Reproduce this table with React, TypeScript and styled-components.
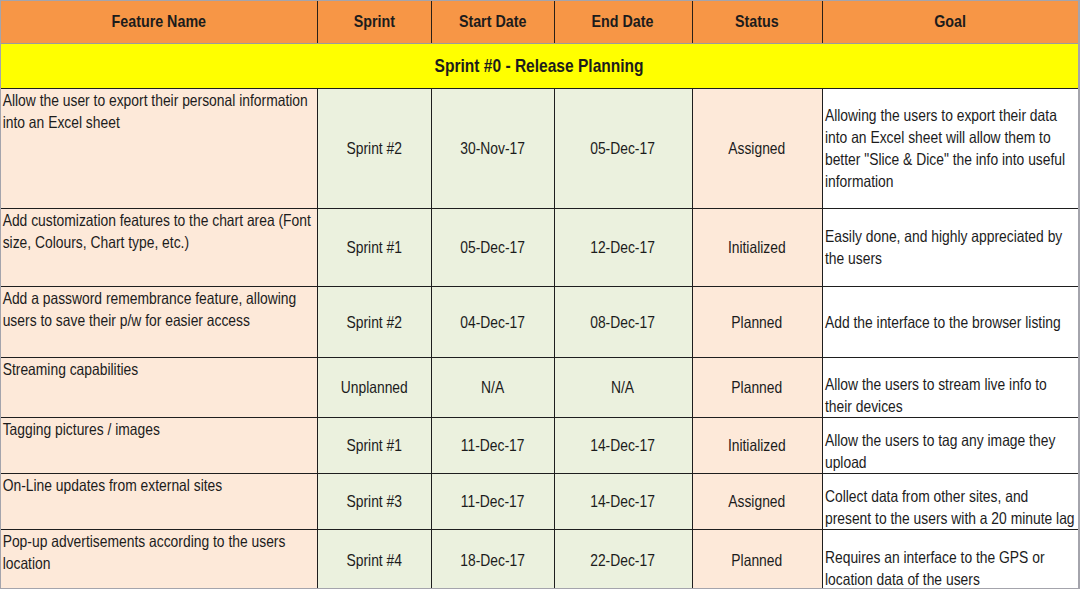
import styled, { createGlobalStyle } from 'styled-components'

const GlobalStyle = createGlobalStyle`
  html, body {
    margin: 0;
    padding: 0;
    background: #ffffff;
  }
`

// no Arial Narrow here: Liberation Sans squeezed horizontally stands in for it
const SQUEEZE = 0.84

const Frame = styled.div`
  width: 1080px;
  height: 589px;
  box-sizing: border-box;
  border: 1px solid #a4a4ac;
  border-right-width: 2px;
  overflow: hidden;
  background: #ffffff;
`

const Sheet = styled.table`
  width: 1077px;
  border-collapse: collapse;
  table-layout: fixed;
  font-family: 'Liberation Sans', Arial, sans-serif;
  color: #1c1c1c;
`

const Narrow = styled.span`
  display: block;
  width: ${100 / SQUEEZE}%;
  margin-left: ${-((100 / SQUEEZE - 100) / 2)}%;
  transform: scaleX(${SQUEEZE});
  transform-origin: center;
`

const HeadCell = styled.th`
  background: #f79646;
  font-size: 17px;
  font-weight: bold;
  text-align: center;
  vertical-align: middle;
  padding: 0;
  border-left: 1px solid #2a2017;
  border-right: 1px solid #2a2017;
  border-bottom: 1px solid #9c9c9c;
  &:first-child {
    border-left: none;
  }
  &:last-child {
    border-right: none;
  }
`

const BandCell = styled.td`
  background: #ffff00;
  font-size: 18.5px;
  font-weight: bold;
  text-align: center;
  vertical-align: middle;
  padding: 0;
  border-bottom: 1px solid #1e1e1e;
`

type Tone = 'peach' | 'green' | 'white'

const tones: Record<Tone, string> = {
  peach: '#fde9d9',
  green: '#ebf1de',
  white: '#ffffff',
}

const Cell = styled.td<{ $tone: Tone; $align?: 'left' | 'center'; $valign?: 'top' | 'middle' | 'bottom' }>`
  background: ${(p) => tones[p.$tone]};
  font-size: 16.5px;
  line-height: 22px;
  text-align: ${(p) => p.$align || 'center'};
  vertical-align: ${(p) => p.$valign || 'middle'};
  padding: ${(p) => (p.$align === 'left' ? '0 2px' : '0')};
  border: 1px solid #1e1e1e;
  &:first-child {
    border-left: none;
  }
  &:last-child {
    border-right: none;
  }
`

const Row = styled.tr<{ $h: number }>`
  height: ${(p) => p.$h}px;
`

type Item = {
  feature: string
  sprint: string
  start: string
  end: string
  status: string
  goal: string
  h: number
  goalAlign: 'middle' | 'bottom'
}

const items: Item[] = [
  {
    feature: 'Allow the user to export their personal information into an Excel sheet',
    sprint: 'Sprint #2',
    start: '30-Nov-17',
    end: '05-Dec-17',
    status: 'Assigned',
    goal: 'Allowing the users to export their data into an Excel sheet will allow them to better "Slice & Dice" the info into useful information',
    h: 120,
    goalAlign: 'middle',
  },
  {
    feature: 'Add customization features to the chart area (Font size, Colours, Chart type, etc.)',
    sprint: 'Sprint #1',
    start: '05-Dec-17',
    end: '12-Dec-17',
    status: 'Initialized',
    goal: 'Easily done, and highly appreciated by the users',
    h: 78,
    goalAlign: 'middle',
  },
  {
    feature: 'Add a password remembrance feature, allowing users to save their p/w for easier access',
    sprint: 'Sprint #2',
    start: '04-Dec-17',
    end: '08-Dec-17',
    status: 'Planned',
    goal: 'Add the interface to the browser listing',
    h: 71,
    goalAlign: 'middle',
  },
  {
    feature: 'Streaming capabilities',
    sprint: 'Unplanned',
    start: 'N/A',
    end: 'N/A',
    status: 'Planned',
    goal: 'Allow the users to stream live info to their devices',
    h: 60,
    goalAlign: 'bottom',
  },
  {
    feature: 'Tagging pictures / images',
    sprint: 'Sprint #1',
    start: '11-Dec-17',
    end: '14-Dec-17',
    status: 'Initialized',
    goal: 'Allow the users to tag any image they upload',
    h: 56,
    goalAlign: 'bottom',
  },
  {
    feature: 'On-Line updates from external sites',
    sprint: 'Sprint #3',
    start: '11-Dec-17',
    end: '14-Dec-17',
    status: 'Assigned',
    goal: 'Collect data from other sites, and present to the users with a 20 minute lag',
    h: 56,
    goalAlign: 'bottom',
  },
  {
    feature: 'Pop-up advertisements according to the users location',
    sprint: 'Sprint #4',
    start: '18-Dec-17',
    end: '22-Dec-17',
    status: 'Planned',
    goal: 'Requires an interface to the GPS or location data of the users',
    h: 61,
    goalAlign: 'bottom',
  },
]

const headers = ['Feature Name', 'Sprint', 'Start Date', 'End Date', 'Status', 'Goal']
const widths = [316, 114, 123, 138, 130, 256]

const App = () => {
  return (
    <Frame>
      <GlobalStyle />
      <Sheet>
        <colgroup>
          {widths.map((w, i) => (
            <col key={i} style={{ width: w }} />
          ))}
        </colgroup>
        <thead>
          <Row $h={42}>
            {headers.map((h) => (
              <HeadCell key={h}>
                <Narrow>{h}</Narrow>
              </HeadCell>
            ))}
          </Row>
        </thead>
        <tbody>
          <Row $h={45}>
            <BandCell colSpan={6}>
              <Narrow>Sprint #0 - Release Planning</Narrow>
            </BandCell>
          </Row>
          {items.map((it) => (
            <Row $h={it.h} key={it.feature}>
              <Cell $tone="peach" $align="left" $valign="top">
                <Narrow>{it.feature}</Narrow>
              </Cell>
              <Cell $tone="green">
                <Narrow>{it.sprint}</Narrow>
              </Cell>
              <Cell $tone="green">
                <Narrow>{it.start}</Narrow>
              </Cell>
              <Cell $tone="green">
                <Narrow>{it.end}</Narrow>
              </Cell>
              <Cell $tone="peach">
                <Narrow>{it.status}</Narrow>
              </Cell>
              <Cell $tone="white" $align="left" $valign={it.goalAlign}>
                <Narrow>{it.goal}</Narrow>
              </Cell>
            </Row>
          ))}
        </tbody>
      </Sheet>
    </Frame>
  )
}

export default App
